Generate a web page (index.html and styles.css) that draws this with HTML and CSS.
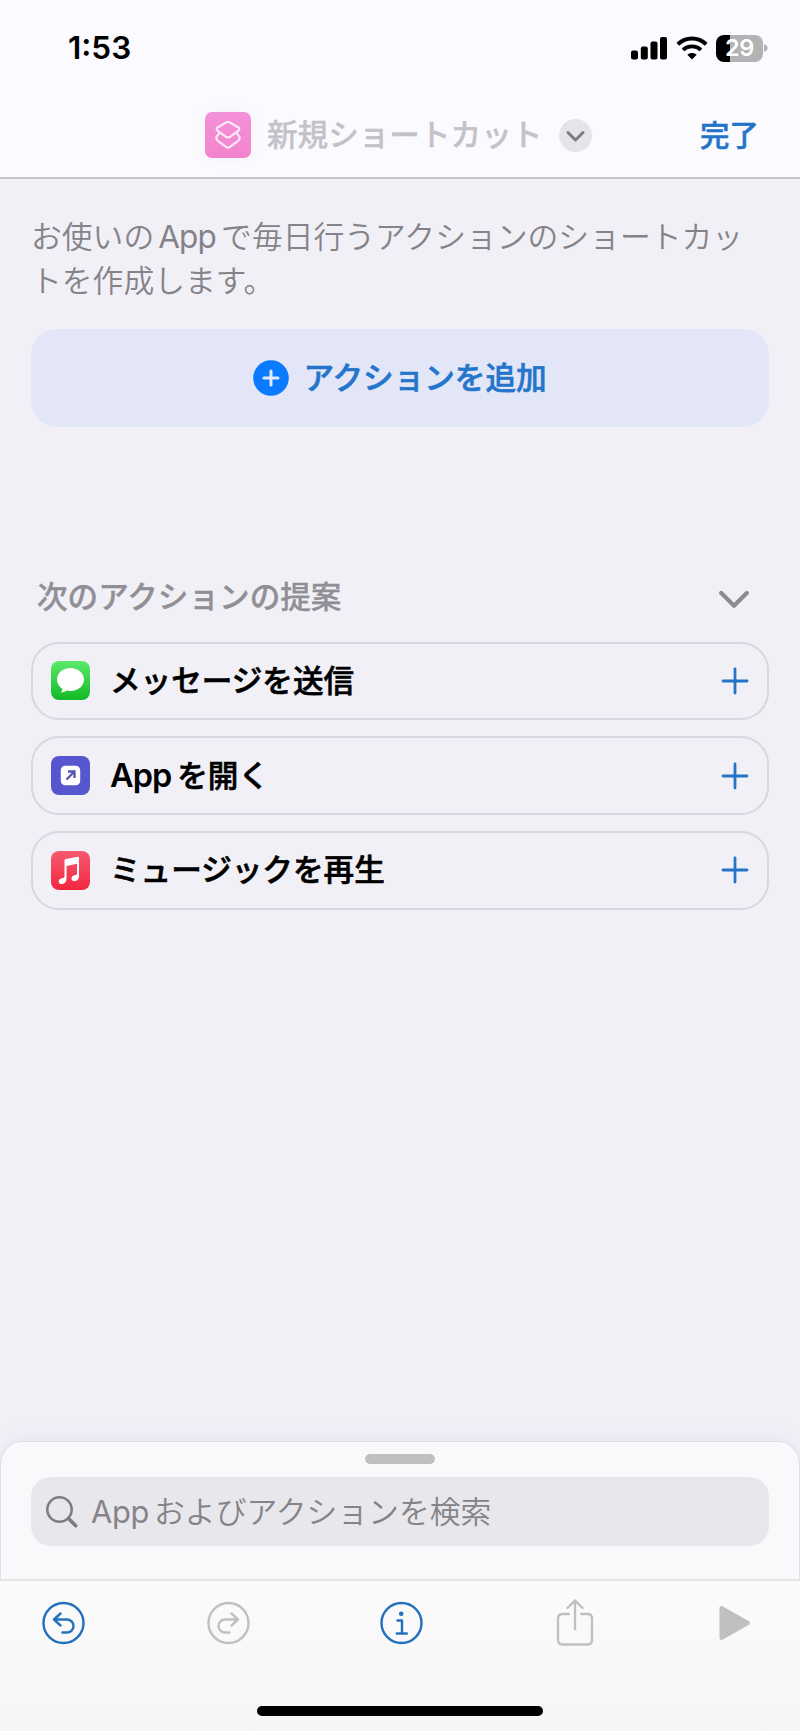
FILE: index.html
```html
<!DOCTYPE html>
<html lang="ja">
<head>
<meta charset="utf-8">
<title>新規ショートカット</title>
<link rel="stylesheet" href="styles.css">
</head>
<body>
<div class="screen">
  <header class="header">
    <div class="status">
      <span class="time">1:53</span>
      <div class="indicators">
        <svg class="signal" width="37" height="24" viewBox="0 0 37 24"><rect x="0" y="14.5" width="7" height="9" rx="2"/><rect x="9.8" y="10.5" width="7" height="13" rx="2"/><rect x="19.5" y="5.5" width="7" height="18" rx="2"/><rect x="29" y="1" width="7" height="22.5" rx="2"/></svg>
        <svg class="wifi" width="32" height="24" viewBox="0 0 32 24"><path d="M1.8 8.2C10 .6 22 .6 30.2 8.2" fill="none" stroke="#000" stroke-width="4"/><path d="M7 13.8c5-4.6 13-4.6 18 0" fill="none" stroke="#000" stroke-width="3.8"/><path d="M16 23.4l-4.7-4.7c2.6-2.3 6.8-2.3 9.4 0z"/></svg>
        <div class="battery"><span>29</span></div>
        <svg class="battery-cap" width="4" height="8" viewBox="0 0 4 8"><path d="M0 0c4.8 1.6 4.8 6.4 0 8z" fill="#b3b3b5"/></svg>
      </div>
    </div>
    <div class="nav">
      <div class="app-icon">
        <svg width="46" height="46" viewBox="0 0 46 46" fill="none" stroke="#fbe9f7" stroke-width="2.2" stroke-linejoin="round" stroke-linecap="round"><path d="M21 10.5Q23 9.4 25 10.5L33 15.2Q35.6 17 33 19L25 24.8Q23 26.2 21 24.8L13 19Q10.4 17 13 15.2Z"/><path d="M14 21.5L12.6 23.2Q10 26 12.8 28.8L21 34.9Q23 36.2 25 34.9L33.2 28.8Q36 26 33.4 23.2L32 21.5"/></svg>
      </div>
      <span class="title">新規ショートカット</span>
      <div class="title-menu">
        <svg width="33" height="33" viewBox="0 0 33 33"><path d="M9 13.5l7.500 7.500 7.500-7.500" fill="none" stroke="#7b7b80" stroke-width="3" stroke-linecap="round" stroke-linejoin="round"/></svg>
      </div>
      <span class="done">完了</span>
    </div>
  </header>

  <main class="content">
    <p class="description">お使いの<span class="latin">App</span>で毎日行うアクションのショートカットを作成します。</p>
    <div class="add-action">
      <svg width="36" height="36" viewBox="0 0 36 36"><circle cx="18" cy="18" r="17.800" fill="#0a7aff"/><path d="M11 18h14M18 11v14" stroke="#e3eaff" stroke-width="3" stroke-linecap="round"/></svg>
      <span>アクションを追加</span>
    </div>
    <div class="section-head">
      <span>次のアクションの提案</span>
      <svg width="30" height="20" viewBox="0 0 30 20"><path d="M2.200 3l12.800 12.800L27.800 3" fill="none" stroke="#8c8b91" stroke-width="4.200" stroke-linecap="round" stroke-linejoin="round"/></svg>
    </div>
    <div class="suggestions">
      <div class="row">
        <svg class="row-icon" width="39" height="39" viewBox="0 0 39 39"><defs><linearGradient id="green" x1="0" y1="0" x2="0" y2="1"><stop offset="0" stop-color="#5bea6c"/><stop offset="1" stop-color="#12b927"/></linearGradient></defs><rect width="39" height="39" rx="8" fill="url(#green)"/><path d="M19.500 7C12 7 6 12 6 18.500c0 4 2.200 7.400 5.600 9.400-.3 1.600-1 2.600-2 3.600 2.600 0 4.600-.8 6.200-2 1.200.3 2.400.4 3.700.4C27 29.900 33 25 33 18.500S27 7 19.500 7z" fill="#fff"/></svg>
        <span>メッセージを送信</span>
        <svg class="plus" width="28" height="28" viewBox="0 0 28 28"><path d="M2 14h24M14 2v24"/></svg>
      </div>
      <div class="row">
        <svg class="row-icon" width="39" height="39" viewBox="0 0 39 39"><rect width="39" height="39" rx="8" fill="#5856cf"/><rect x="9.800" y="9.800" width="19.400" height="19.400" rx="4.500" fill="#fff"/><path d="M15.500 23.500L23 16M17 15.500h6.500V22" fill="none" stroke="#5754b4" stroke-width="2.300"/></svg>
        <span><span class="latin">App</span>を開く</span>
        <svg class="plus" width="28" height="28" viewBox="0 0 28 28"><path d="M2 14h24M14 2v24"/></svg>
      </div>
      <div class="row">
        <svg class="row-icon" width="39" height="39" viewBox="0 0 39 39"><defs><linearGradient id="red" x1="0" y1="0" x2="0" y2="1"><stop offset="0" stop-color="#f65a70"/><stop offset="1" stop-color="#f2273f"/></linearGradient></defs><rect width="39" height="39" rx="8" fill="url(#red)"/><path d="M13.500 9.200Q13.500 8.300 14.500 8.100L26.800 5.700Q28 5.500 28 6.700V25.500C28 28.200 26 29.900 23.800 30C21.800 30.100 20.500 29 20.500 27.400C20.500 25.700 21.800 24.700 23.600 24.300C25.200 24 26 23.700 26 22.300V12.800L15.500 14.900V28.300C15.500 31 13.500 32.900 11.100 33C9.100 33.100 7.700 32 7.700 30.400C7.700 28.700 9 27.700 10.900 27.300C12.700 26.900 13.500 26.600 13.500 25.200Z" fill="#fff"/></svg>
        <span>ミュージックを再生</span>
        <svg class="plus" width="28" height="28" viewBox="0 0 28 28"><path d="M2 14h24M14 2v24"/></svg>
      </div>
    </div>
  </main>

  <section class="sheet">
    <div class="grabber"></div>
    <div class="search">
      <svg width="34" height="34" viewBox="0 0 34 34" fill="none" stroke="#7e7d83" stroke-linecap="round"><circle cx="14.500" cy="14.500" r="12.200" stroke-width="2.600"/><path d="M23.500 23.500l7.200 7.200" stroke-width="3.600"/></svg>
      <span><span class="latin">App</span>およびアクションを検索</span>
    </div>
  </section>

  <footer class="toolbar">
    <div class="tools">
      <svg width="43" height="48" viewBox="0 0 43 48" class="tool active"><circle cx="21.500" cy="24" r="20"/><path d="M18.500 14.500l-6.500 6 6.500 6M12.500 20.500h12.500a6.500 6.500 0 0 1 0 13h-4.500"/></svg>
      <svg width="43" height="48" viewBox="0 0 43 48" class="tool"><circle cx="21.500" cy="24" r="20"/><path d="M24.500 14.500l6.500 6-6.500 6M30.500 20.500H18a6.500 6.500 0 0 0 0 13h4.500"/></svg>
      <svg width="43" height="48" viewBox="0 0 43 48" class="tool active"><circle cx="21.500" cy="24" r="20"/><circle cx="21.200" cy="14.800" r="2.300" class="dot"/><path d="M17.500 21.500h4.500v13M16.800 34.500h10"/></svg>
      <svg width="40" height="50" viewBox="0 0 40 50" class="tool"><path d="M13.800 16H7.500q-4.500 0-4.500 4.500V42q0 4.500 4.500 4.500h25q4.500 0 4.500-4.500V20.500Q37 16 32.500 16h-6.300M20 31V2.500M12.500 10L20 2.500l7.500 7.500"/></svg>
      <svg width="32" height="36" viewBox="0 0 32 36"><path d="M2.500 3v30L29 18z" fill="#c0c0c1" stroke="#c0c0c1" stroke-width="4" stroke-linejoin="round"/></svg>
    </div>
    <div class="home-indicator"></div>
  </footer>
</div>
</body>
</html>
```

FILE: styles.css
```css
* { box-sizing: border-box; }

body {
  margin: 0;
  background: #f2f0f7;
  font-family: "Inter", "Noto Sans CJK JP", sans-serif;
  font-size: 30.6px;
  line-height: 44px;
}

svg { display: block; flex: none; }

.screen {
  display: flex;
  flex-direction: column;
  width: 800px;
  height: 1731px;
  overflow: hidden;
}

.header {
  height: 179px;
  background: #fbfaff;
  border-bottom: 2px solid #c5c3c9;
}

.status {
  display: flex;
  justify-content: space-between;
  height: 96px;
  padding: 0 32px 0 68px;
  align-items: center;
}

.time {
  font-size: 31.5px;
  font-weight: 600;
}

.indicators { display: flex; align-items: center; }
.wifi { margin-left: 8px; }

.battery {
  display: flex;
  align-items: center;
  justify-content: center;
  width: 47px;
  height: 27px;
  margin-left: 8px;
  border-radius: 8px;
  background: linear-gradient(to right, #000 14px, #b3b3b5 14px);
  color: #fff;
  font-size: 23.5px;
  font-weight: 600;
  letter-spacing: -0.3px;
}

.battery-cap { margin-left: 1px; }

.nav {
  display: flex;
  align-items: center;
  height: 78px;
  padding-left: 205px;
}

.app-icon {
  width: 46px;
  height: 46px;
  border-radius: 7px;
  background: linear-gradient(#f391d8, #f384ce);
  box-shadow: 0 0 18px rgba(0, 0, 0, 0.04);
}

.title {
  width: 276px;
  margin-left: 16px;
  color: #c3c2c8;
  font-weight: 500;
  white-space: nowrap;
  -webkit-text-stroke: 0.3px;
}

.title-menu {
  width: 33px;
  height: 33px;
  margin-left: 16px;
  border-radius: 50%;
  background: #e5e4e9;
}

.done {
  margin-left: 108px;
  color: #2274c8;
  font-size: 29.5px;
  font-weight: 500;
  -webkit-text-stroke: 0.5px;
}

.content { flex: 1; padding: 36px 31px 0; }

.description {
  margin: 0 0 26px;
  color: #858389;
  font-size: 30.8px;
  font-weight: 350;
  line-height: 44px;
}

.latin { margin-right: 5px; letter-spacing: -0.3px; }
.description .latin { margin-left: 4px; font-size: 31.5px; font-weight: 400; letter-spacing: -0.8px; }

.add-action {
  display: flex;
  align-items: center;
  justify-content: center;
  gap: 14px;
  height: 98px;
  border-radius: 26px;
  background: #e2e6f6;
  color: #2475cc;
  font-weight: 500;
  -webkit-text-stroke: 0.6px;
}

.section-head {
  display: flex;
  justify-content: space-between;
  align-items: center;
  margin-top: 148px;
  padding: 0 20px 0 6px;
  color: #918f96;
  font-weight: 500;
  -webkit-text-stroke: 0.3px;
}

.section-head svg { margin-top: 6px; }

.suggestions {
  display: flex;
  flex-direction: column;
  gap: 16px;
  margin-top: 22.5px;
}

.row {
  display: flex;
  align-items: center;
  height: 78.700px;
  padding: 0 18px 0 18px;
  border: 2px solid #d9d6df;
  border-radius: 28px;
  color: #000;
  font-weight: 500;
  -webkit-text-stroke: 0.6px;
}

.row-icon { margin-right: 20px; }

.row .latin {
  margin-right: 6px;
  font-size: 32.5px;
  font-weight: 600;
  letter-spacing: -1px;
  -webkit-text-stroke: 0;
}

.plus {
  margin-left: auto;
  fill: none;
  stroke: #2475c8;
  stroke-width: 2.800;
  stroke-linecap: round;
}

.sheet {
  height: 138px;
  padding: 12px 30px 0;
  border: 1px solid #dfdde5;
  border-bottom: 0;
  border-radius: 22px 22px 0 0;
  background: #faf8fa;
  box-shadow: 0 -2px 26px rgba(40, 40, 90, 0.06);
}

.grabber {
  width: 70px;
  height: 10px;
  margin: 0 auto 13px;
  border-radius: 5px;
  background: #c0bfc1;
}

.search {
  display: flex;
  align-items: center;
  gap: 12px;
  height: 69px;
  padding-left: 14px;
  border-radius: 20px;
  background: #e8e7ec;
  color: #858389;
  font-size: 30.8px;
  font-weight: 350;
}

.search .latin { font-weight: 400; }

.toolbar {
  height: 152px;
  border-top: 2px solid #e5e4e7;
  background: linear-gradient(#fbfbfc, #f7f6f7);
}

.tools {
  display: grid;
  grid-template-columns: 165px 173px 175px 163.500px 32px;
  align-items: center;
  height: 84px;
  padding-left: 42px;
}

.tool {
  fill: none;
  stroke: #c0c0c1;
  stroke-width: 2.400;
  stroke-linecap: round;
  stroke-linejoin: round;
}

.tool.active { stroke: #2371bd; }
.tool .dot { fill: #2371bd; stroke: none; }

.home-indicator {
  width: 286px;
  height: 10px;
  margin: 41px auto 0;
  border-radius: 5px;
  background: #000;
}
```
